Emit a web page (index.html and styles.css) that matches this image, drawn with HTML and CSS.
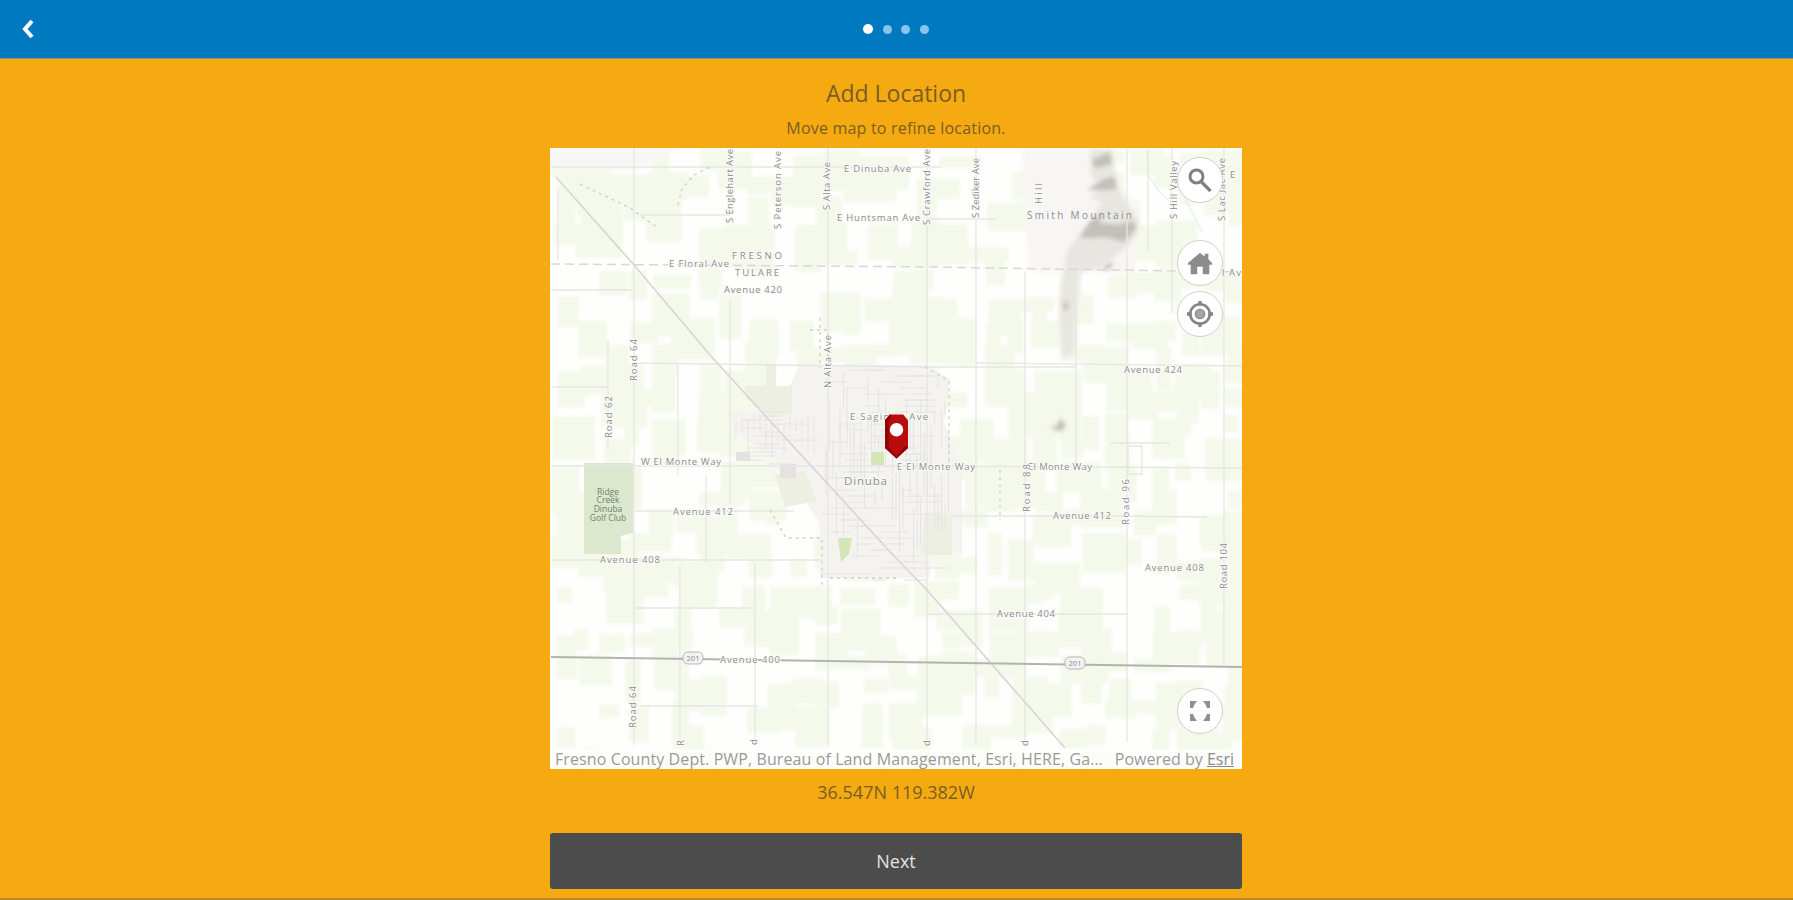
FILE: index.html
```html
<!doctype html>
<html lang="en">
<head>
    <meta charset="UTF-8">
    <meta name="viewport" content="width=device-width, initial-scale=1.0">
    <title>Add Location</title>
    <link rel="stylesheet" href="styles.css">
</head>
<body>
    <header class="topbar">
        <a class="back" href="#" aria-label="Back">
            <svg width="12" height="20" viewBox="0 0 12 20"><path d="M10 2L3 10l7 8"/></svg>
        </a>
        <div class="steps">
            <span class="on"></span>
            <span></span>
            <span></span>
            <span></span>
        </div>
    </header>
    <main class="content">
        <h1>Add Location</h1>
        <p class="hint">Move map to refine location.</p>
        <div class="map">
            <svg class="base" viewBox="550 148 692 621">
                <!-- fields, filled by the script below -->
                <g id="fields" class="fields"></g>

                <!-- hills -->
                <g class="relief">
                    <path class="slope" d="M1022 150h75l42 62-5 60h-105z"/>
                    <path class="slope" d="M550 148h130l-40 20h-90z"/>
                    <path class="hill" d="M1090 149h21l6 32 4 12 17 26-2 18-15 15-22 16-19 4-2 22-4 60-12 4-3-55 8-52 20-26 15-22-12-6 13-8-12-12z"/>
                    <path class="ridge" d="M1092 160l18-8 2 12-17 4zM1087 190l17-11 11-2 1 12-13 1zM1090 222l12-9-3 10 18 2 16-4 4 7-14 14-16-5-20 1-7-2zM1104 267l9-6-1 6-8 4zM1063 304l4-4 1 9-4 2z"/>
                    <path class="ridge" d="M1049 425l7 2 4-9 6 7-4 6-6 0z"/>
                </g>

                <!-- town -->
                <path class="town" d="M730 412l40-2 15-15 15-30h125l25 14-6 44 18 40v90h-32v25h-110v-55l-40-60-50-36z"/>
                <path class="grove" d="M745 386h21v-22h10v22h16v28l-20 4-26-20zM775 475l30-4 12 30-32 6zM925 515h27v40h-32z"/>
                <path id="streets" class="street"/>
                <path class="golf" d="M584 463h49v70l-12 3v18h-37z"/>
                <path class="park" d="M871 452h13v13h-13zM838 538h14l-3 16-8 8z"/>
                <path class="civic" d="M780 464h16v14h-16zM736 452h14v9h-14z"/>

                <!-- roads -->
                <path class="water" d="M1147 149l1 26 12 18 12 10M1177 182l25 50"/>
                <path class="road" d="M634 148v597M680 565v180M706 475v88M678 363v112M730 300v204M755 563v182M828 148v597M927 148v597M976 148v597M1025 272v473M1076 300v167M1127 148v594M1148 150v100M1172 148v165M1224 148v517M608 340v110M558 190v70"/>
                <path class="road" d="M1128 446h14v28h-14zM551 167h390M640 215h90M551 290h80M551 387h57M634 363l293 4h150M927 219h70M976 363l266 3M551 466h350l341 2M634 511h160M952 516h160l95 1M551 560h270M634 608h120M927 614h200M640 706h118M1110 443h60"/>
                <path class="road dashed" d="M580 184l50 24 28 20M678 205l4-16 12-14 16-8M820 318v50M925 367l24 14v82M1000 470v50M770 510l16 28h36v48M810 330h18v35M830 578h70"/>
                <path class="county" d="M551 264l380 3 311 5"/>
                <path class="rail" d="M556 177l78 88 76 90 60 66 123 134 34 35 138 158"/>
                <path class="highway" d="M551 657l344 5 347 5"/>

                <!-- highway shields -->
                <rect class="shield" x="683" y="652" width="20" height="12" rx="5"/>
                <rect class="shield" x="1065" y="657" width="20" height="12" rx="5"/>

                <!-- labels -->
                <g class="labels">
                    <text x="844" y="172" textLength="67">E Dinuba Ave</text>
                    <text x="837" y="221" textLength="83">E Huntsman Ave</text>
                    <text x="669" y="267" textLength="60">E Floral Ave</text>
                    <text x="732" y="259" textLength="50">FRESNO</text>
                    <text x="735" y="276" textLength="44">TULARE</text>
                    <text x="724" y="293" textLength="58">Avenue 420</text>
                    <text x="1124" y="373" textLength="58">Avenue 424</text>
                    <text x="641" y="465" textLength="80">W El Monte Way</text>
                    <text x="673" y="515" textLength="60">Avenue 412</text>
                    <text x="600" y="563" textLength="60">Avenue 408</text>
                    <text x="850" y="420" textLength="78">E Saginaw Ave</text>
                    <text x="897" y="470" textLength="78">E El Monte Way</text>
                    <text x="1028" y="470" textLength="64">El Monte Way</text>
                    <text x="1053" y="519" textLength="58">Avenue 412</text>
                    <text x="1145" y="571" textLength="59">Avenue 408</text>
                    <text x="997" y="617" textLength="58">Avenue 404</text>
                    <text x="720" y="663" textLength="60">Avenue 400</text>
                    <text class="city" x="844" y="485" textLength="43">Dinuba</text>
                    <text class="peak" x="1027" y="219" textLength="105">Smith Mountain</text>
                    <text class="num" x="693" y="661">201</text>
                    <text class="num" x="1075" y="666">201</text>
                    <text x="1230" y="178">E</text>
                    <text x="1222" y="276" textLength="19">l Av</text>
                    <text transform="translate(733 223) rotate(-90)" textLength="74">S Englehart Ave</text>
                    <text transform="translate(781 229) rotate(-90)" textLength="78">S Peterson Ave</text>
                    <text transform="translate(830 210) rotate(-90)" textLength="48">S Alta Ave</text>
                    <text transform="translate(930 225) rotate(-90)" textLength="76">S Crawford Ave</text>
                    <text transform="translate(979 218) rotate(-90)" textLength="60">S Zediker Ave</text>
                    <text transform="translate(1042 204) rotate(-90)" textLength="21">Hill</text>
                    <text transform="translate(1177 219) rotate(-90)" textLength="58">S Hill Valley</text>
                    <text transform="translate(1225 221) rotate(-90)" textLength="63">S Lac Jac Ave</text>
                    <text transform="translate(637 381) rotate(-90)" textLength="42">Road 64</text>
                    <text transform="translate(612 438) rotate(-90)" textLength="42">Road 62</text>
                    <text transform="translate(831 388) rotate(-90)" textLength="53">N Alta Ave</text>
                    <text transform="translate(1030 512) rotate(-90)" textLength="48">Road 88</text>
                    <text transform="translate(1129 525) rotate(-90)" textLength="46">Road 96</text>
                    <text transform="translate(1227 589) rotate(-90)" textLength="46">Road 104</text>
                    <text transform="translate(636 728) rotate(-90)" textLength="42">Road 64</text>
                    <text transform="translate(684 746) rotate(-90)">R</text>
                    <text transform="translate(757 745) rotate(-90)">d</text>
                    <text transform="translate(930 746) rotate(-90)">d</text>
                    <text transform="translate(1028 746) rotate(-90)">d</text>
                </g>
                <g class="golf-label">
                    <text x="608" y="495">Ridge</text>
                    <text x="608" y="503">Creek</text>
                    <text x="608" y="512">Dinuba</text>
                    <text x="608" y="521">Golf Club</text>
                </g>
            </svg>

            <svg class="pin" width="23" height="45" viewBox="0 0 24 46">
                <path fill="#b80d0d" d="M5 0h14l5 6v29L12 46 0 35V6z"/>
                <path fill="#8d0508" d="M0 6l5-6 2 1-3 6v27l8 10 8-10 4-1v2L12 46 0 35z"/>
                <circle cx="12" cy="16" r="7" fill="#fff"/>
            </svg>

            <div class="tools">
                <button class="tool" aria-label="Search">
                    <svg width="28" height="28" viewBox="0 0 28 28"><circle cx="10.500" cy="10.500" r="6.500" fill="none" stroke="#808080" stroke-width="3"/><path d="M15.500 16l9 9" stroke="#808080" stroke-width="3.200"/></svg>
                </button>
                <button class="tool home" aria-label="Home">
                    <svg width="26" height="26" viewBox="0 0 28 28"><path fill="#8c8c8c" d="M14 3l5 4V4h4v6l4 4v2h-3v10h-7v-8h-6v8H4V16H1v-2z"/></svg>
                </button>
                <button class="tool" aria-label="Find my location">
                    <svg width="28" height="28" viewBox="0 0 30 30"><circle cx="15" cy="15" r="10.500" fill="none" stroke="#848484" stroke-width="2.800"/><circle cx="15" cy="15" r="5" fill="#a5a5a5" stroke="#8a8a8a" stroke-width="1.500"/><path d="M15 1v5M15 24v5M1 15h5M24 15h5" stroke="#848484" stroke-width="3.500"/></svg>
                </button>
                <button class="tool full" aria-label="Full screen">
                    <svg width="22" height="22" viewBox="0 0 22 22"><path fill="#909090" d="M1 1h7L5.500 4.500 4 8H1zM21 1h-7l2.500 3.500L18 8h3zM1 21v-7h3l1.500 3.500L8 21zM21 21v-7h-3l-1.500 3.500L14 21z"/></svg>
                </button>
            </div>

            <div class="attribution">
                <span class="sources">Fresno County Dept. PWP, Bureau of Land Management, Esri, HERE, Ga…</span>
                <span class="powered">Powered by <a href="#">Esri</a></span>
            </div>
        </div>
        <p class="coords">36.547N 119.382W</p>
        <button class="next">Next</button>
    </main>
    <script>
        // small seeded generator, so that the fields come out the same each time
        var seed = 11;
        function rnd(){
            seed = (seed * 16807) % 2147483647;
            return seed / 2147483647;
        }

        var html = "";
        for(var y=148;y<769;y+=24){
            for(var x=550;x<1242;x+=24){
                if(rnd() < 0.5){
                    var w = 14 + rnd()*34, h = 12 + rnd()*36;
                    html += '<rect x="'+Math.round(x+rnd()*8)+'" y="'+Math.round(y+rnd()*8)+'" width="'+Math.round(w)+'" height="'+Math.round(h)+'" rx="3"/>';
                }
            }
        }
        document.getElementById("fields").innerHTML = html;

        // town streets
        var d = "";
        for(var i=0;i<36;i++){
            for(var j=0;j<2;j++){
                d += "M"+Math.round(822+rnd()*90)+" "+(370+i*6)+"h"+Math.round(12+rnd()*26);
                d += "M"+(826+i*3.5)+" "+Math.round(370+rnd()*150)+"v"+Math.round(12+rnd()*50);
            }
        }
        for(i=0;i<14;i++){
            d += "M"+Math.round(732+rnd()*50)+" "+(412+i*4)+"h"+Math.round(12+rnd()*30);
            d += "M"+(736+i*6)+" "+Math.round(412+rnd()*12)+"v"+Math.round(12+rnd()*28);
        }
        document.getElementById("streets").setAttribute("d", d);
    </script>
</body>
</html>
```
FILE: styles.css
```css
*{
    padding: 0;
    margin: 0;
    box-sizing: border-box;
}
html,body{
    height: 100%;
}
body{
    display: flex;
    flex-direction: column;
    background: #f4aa10;
    border-bottom: 2px solid #b58a2b;
    font-family: "Open Sans", "Noto Sans", sans-serif;
    color: #7b5d24;
    overflow: hidden;
}
button{
    border: none;
    font-family: inherit;
}

.topbar{
    display: grid;
    grid-template-columns: 1fr auto 1fr;
    align-items: center;
    height: 59px;
    flex: none;
    padding-left: 22px;
    background: #0079c1;
    border-bottom: 1px solid #8b9270;
}
.back{
    display: block;
    width: 12px;
    height: 20px;
}
.back path{
    fill: none;
    stroke: #fff;
    stroke-width: 4;
}
.steps{
    display: flex;
    align-items: center;
    gap: 9.5px;
    margin-right: 23px;
}
.steps span{
    width: 9px;
    height: 9px;
    border-radius: 50%;
    background: #87c4ee;
}
.steps .on{
    width: 10px;
    height: 10px;
    background: #fff;
}

.content{
    width: 692px;
    margin: 0 auto;
    padding-right: 0;
    text-align: center;
    /* whole pixels, the window has an odd width */
    margin-left: calc(50% - 346.5px);
}
h1{
    padding-top: 17px;
    font-size: 23px;
    line-height: 34px;
    font-weight: 400;
}
.hint{
    height: 38px;
    padding-top: 6px;
    font-size: 16px;
    line-height: 24px;
    letter-spacing: .2px;
}

.map{
    position: relative;
    height: 621px;
    overflow: hidden;
    background: #fefefc;
}
.base{
    display: block;
    width: 692px;
    height: 621px;
}
.fields{
    fill: #f5f9ec;
    filter: blur(1.5px);
}
.relief{
    filter: blur(2px);
}
.slope{
    fill: #f8f6f4;
}
.hill{
    fill: #e8e6e1;
}
.ridge{
    fill: #c3bfb9;
}
.town{
    fill: #f4f3f0;
}
.grove{
    fill: #eeefe3;
}
.golf{
    fill: #dbe8cd;
}
.park{
    fill: #d4e5b8;
}
.civic{
    fill: #e3e2e0;
}
.street,.road,.county,.rail,.highway,.water{
    fill: none;
    stroke: #e4e4e1;
    stroke-width: 1;
}
.road{
    stroke: #e6e6e3;
    stroke-width: 1.3;
}
.dashed{
    stroke: #cfcfcc;
    stroke-dasharray: 3 4;
}
.county{
    stroke: #d8d8d5;
    stroke-width: 1.5;
    stroke-dasharray: 9 5;
}
.rail{
    stroke: #d6d5d3;
    stroke-width: 1.6;
}
.highway{
    stroke: #b3b3b0;
    stroke-width: 2;
}
.water{
    stroke: #dcebf1;
}
.shield{
    fill: #f3f3f3;
    stroke: #b5b5b5;
}
.labels{
    font-size: 9.5px;
    fill: #8c8c8c;
    stroke: #fbfbf8;
    stroke-width: 2px;
    paint-order: stroke;
}
.labels .city{
    font-size: 11.5px;
}
.labels .peak{
    font-size: 10px;
    stroke: none;
}
.labels .num{
    font-size: 7.5px;
    text-anchor: middle;
    stroke: none;
}
.golf-label{
    font-size: 8.5px;
    fill: #71806b;
    text-anchor: middle;
}

.pin{
    position: absolute;
    left: 335px;
    top: 266px;
}
.tools{
    position: absolute;
    top: 9px;
    right: 19px;
    bottom: 35px;
    display: flex;
    flex-direction: column;
    gap: 5px;
}
.tool{
    display: flex;
    align-items: center;
    justify-content: center;
    width: 46px;
    height: 46px;
    border: 1.5px solid #cfcfcf;
    border-radius: 50%;
    background: #fff;
}
.home{
    margin-top: 32px;
}
.full{
    margin-top: auto;
}

.attribution{
    position: absolute;
    left: 0;
    right: 0;
    bottom: 0;
    display: flex;
    justify-content: space-between;
    height: 20px;
    padding: 0 8px 0 5px;
    background: rgba(255,255,255,.7);
    font-size: 16px;
    line-height: 20px;
    color: #999;
    white-space: nowrap;
}
.sources{
    letter-spacing: .1px;
}
.attribution a{
    color: #8a8a8a;
}

.coords{
    padding-top: 11px;
    height: 64px;
    font-size: 18px;
    line-height: 24px;
}
.next{
    display: block;
    width: 100%;
    height: 56px;
    border-radius: 3px;
    background: #4c4c4c;
    color: #e2e2e2;
    font-size: 18px;
}
```
